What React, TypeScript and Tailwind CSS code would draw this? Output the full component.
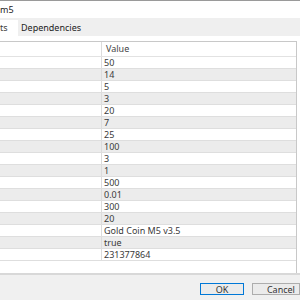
const rows = [
  "50",
  "14",
  "5",
  "3",
  "20",
  "7",
  "25",
  "100",
  "3",
  "1",
  "500",
  "0.01",
  "300",
  "20",
  "Gold Coin M5 v3.5",
  "true",
  "231377864",
];

function ParamRow({ value, odd }: { value: string; odd: boolean }) {
  return (
    <div
      className={
        "flex h-[12px] border-b border-[#dedede] " + (odd ? "bg-[#ececec]" : "bg-white")
      }
    >
      <div className="w-[102px] border-r border-[#dcdcdc]" />
      <div className="pl-[2px] leading-[11px]">{value}</div>
    </div>
  );
}

export default function App() {
  return (
    <div className="w-[300px] h-[300px] overflow-hidden flex flex-col bg-[#f0f0f0] text-[9px] text-[#3a3a3a] font-['Noto_Sans','Liberation_Sans',sans-serif] border-t border-[#9a9a9a]">
      <div className="h-[17px] bg-white flex items-center text-[#222]">m5</div>
      <div className="h-[18px] flex items-end bg-[#efefef]">
        <div className="h-[16px] w-[18px] bg-white flex items-center">ts</div>
        <div className="h-[16px] px-[3px] flex items-center text-[#222]">Dependencies</div>
      </div>
      <div className="bg-white pt-[5px] pr-[3px]">
        <div className="border-t border-r border-[#c8c8c8] bg-white">
          <div className="flex h-[15px] border-b border-[#e2e2e2]">
            <div className="w-[102px] border-r border-[#dcdcdc]" />
            <div className="pl-[4px] flex items-center text-[#444]">Value</div>
          </div>
          {rows.map((v, i) => (
            <ParamRow key={i} value={v} odd={i % 2 === 1} />
          ))}
          <div className="h-[12px] bg-white" />
        </div>
      </div>
      <div className="h-[2px] bg-[#d8d8d8]" />
      <div className="flex-1 flex items-start pt-[8px] pl-[200px] gap-[8px]">
        <button className="w-[62px] h-[12px] border border-[#0078d7] bg-[#ebebeb] flex items-center justify-center text-[9px] text-[#333] leading-none">
          OK
        </button>
        <button className="w-[62px] h-[12px] border border-[#adadad] bg-[#ebebeb] flex items-center justify-start pl-[14px] text-[9px] text-[#333] leading-none">
          Cancel
        </button>
      </div>
    </div>
  );
}
